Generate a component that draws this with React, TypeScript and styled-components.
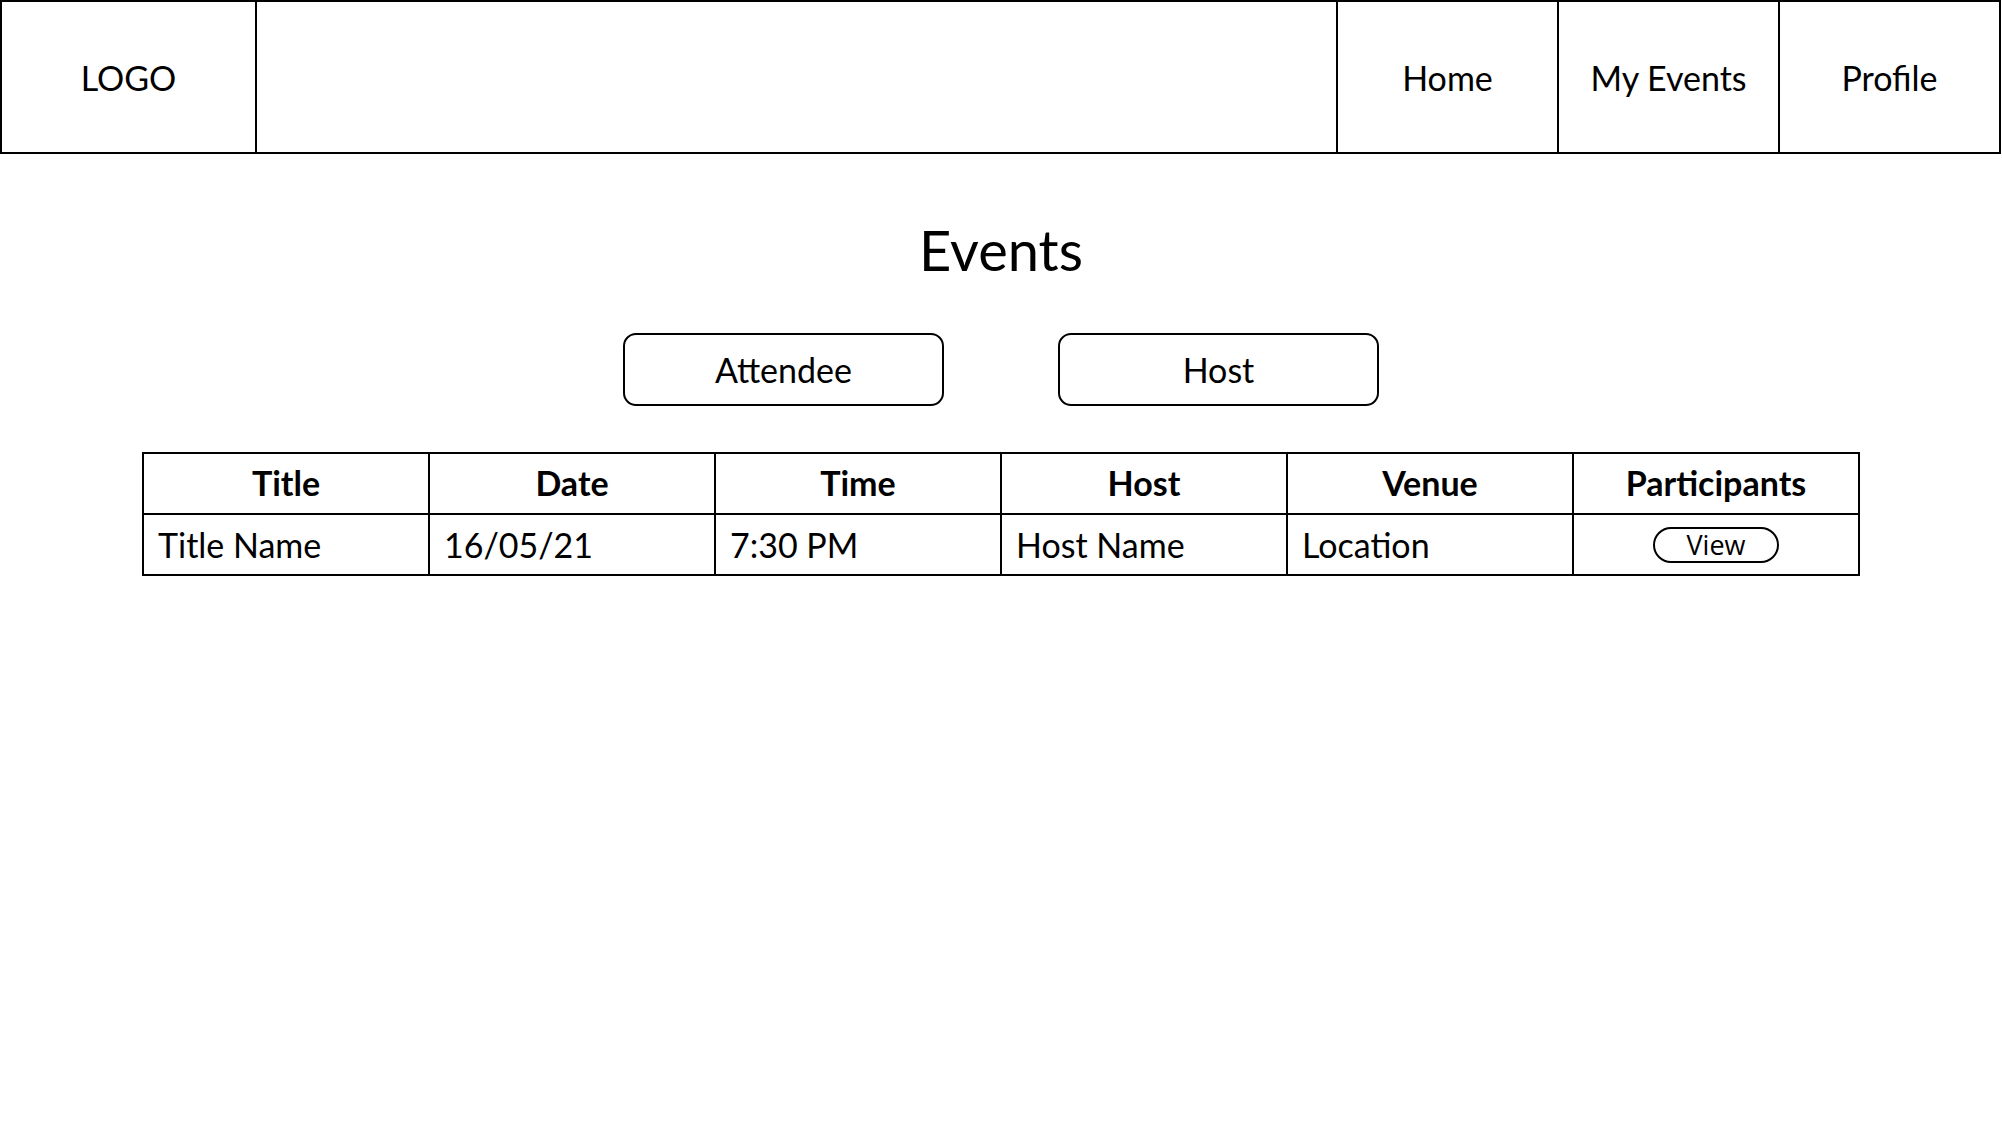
import React from "react";
import styled, { createGlobalStyle } from "styled-components";

const Global = createGlobalStyle`
  html, body { margin: 0; padding: 0; background: #fff; }
  body { font-family: Lato, "Open Sans", sans-serif; color: #000; }
`;

const Page = styled.div`
  width: 2002px;
  min-height: 1126px;
  display: flex;
  flex-direction: column;
  align-items: center;
`;

const Header = styled.header`
  box-sizing: border-box;
  width: 2001px;
  align-self: flex-start;
  height: 154px;
  border: 2px solid #000;
  display: flex;
`;

const LogoCell = styled.div`
  width: 253px;
  border-right: 2px solid #000;
  display: flex;
  align-items: center;
  justify-content: center;
  font-size: 34px;
`;

const Spacer = styled.div`
  flex: 1;
`;

const NavCell = styled.div`
  box-sizing: border-box;
  width: 221px;
  border-left: 2px solid #000;
  display: flex;
  align-items: center;
  justify-content: center;
  font-size: 34px;
`;

const Title = styled.h1`
  margin: 62px 0 0;
  font-size: 56px;
  font-weight: 400;
  line-height: 67px;
`;

const Toggle = styled.div`
  margin-top: 50px;
  display: flex;
  gap: 114px;
`;

const ToggleButton = styled.button`
  box-sizing: border-box;
  width: 321px;
  height: 73px;
  border: 2px solid #000;
  border-radius: 13px;
  background: #fff;
  font-family: inherit;
  font-size: 34px;
  color: #000;
  padding: 0;
`;

const Table = styled.table`
  margin-top: 46px;
  width: 1718px;
  border-collapse: collapse;
  table-layout: fixed;
  border: 2px solid #000;
`;

const Th = styled.th`
  height: 56px;
  border: 2px solid #000;
  font-size: 34px;
  font-weight: 700;
  text-align: center;
  padding: 0 0 3px;
`;

const Td = styled.td<{ $center?: boolean }>`
  height: 58px;
  border: 2px solid #000;
  font-size: 34px;
  text-align: ${(p) => (p.$center ? "center" : "left")};
  padding: ${(p) => (p.$center ? "0" : "0 0 1px 14px")};
`;

const ViewButton = styled.button`
  display: block;
  margin: 0 auto;
  box-sizing: border-box;
  width: 126px;
  height: 36px;
  border: 2px solid #000;
  border-radius: 18px;
  background: #fff;
  font-family: "Open Sans", sans-serif;
  font-size: 27px;
  line-height: 1;
  color: #000;
  padding: 0;
`;

const headers = ["Title", "Date", "Time", "Host", "Venue", "Participants"];

export default function App() {
  return (
    <>
      <Global />
      <Page>
        <Header>
          <LogoCell>LOGO</LogoCell>
          <Spacer />
          <NavCell>Home</NavCell>
          <NavCell>My Events</NavCell>
          <NavCell>Profile</NavCell>
        </Header>
        <Title>Events</Title>
        <Toggle>
          <ToggleButton>Attendee</ToggleButton>
          <ToggleButton>Host</ToggleButton>
        </Toggle>
        <Table>
          <thead>
            <tr>
              {headers.map((h) => (
                <Th key={h}>{h}</Th>
              ))}
            </tr>
          </thead>
          <tbody>
            <tr>
              <Td>Title Name</Td>
              <Td>16/05/21</Td>
              <Td>7:30 PM</Td>
              <Td>Host Name</Td>
              <Td>Location</Td>
              <Td $center>
                <ViewButton>View</ViewButton>
              </Td>
            </tr>
          </tbody>
        </Table>
      </Page>
    </>
  );
}
